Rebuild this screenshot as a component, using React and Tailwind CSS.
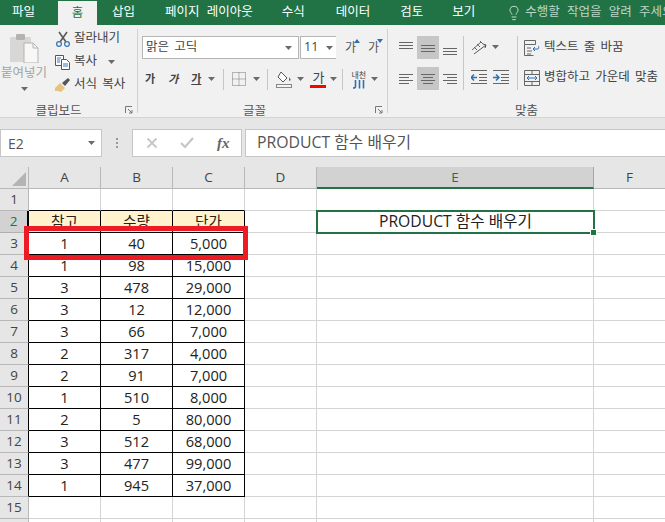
import React from 'react';
import { Lightbulb } from 'lucide-react';

const font = { fontFamily: '"Open Sans", "Noto Sans CJK KR", sans-serif' };

const Caret = ({ className = '' }) => (
  <svg width="7" height="4" viewBox="0 0 7 4" className={className}>
    <path d="M0 0h7L3.5 4z" fill="#6a6a6a" />
  </svg>
);

const Sep = ({ className = '' }) => <div className={`w-px bg-[#c6c6c6] ${className}`} />;

const PasteIcon = () => (
  <svg width="30" height="30" viewBox="0 0 30 30">
    <rect x="1" y="4" width="21" height="25" rx="1" fill="#d9d6d6" />
    <rect x="7" y="1" width="9" height="6" rx="1" fill="#b5b2b2" />
    <path d="M15 10h9l5 5v15H15z" fill="#f7f7f7" stroke="#b3b3b3" />
    <path d="M24 10v5h5" fill="none" stroke="#b3b3b3" />
  </svg>
);

const ScissorsIcon = () => (
  <svg width="16" height="16" viewBox="0 0 16 16" fill="none">
    <path d="M4 1l7 10M12 1L5 11" stroke="#5a5a5a" strokeWidth="1.6" />
    <circle cx="4" cy="13" r="2.4" stroke="#3f77b5" strokeWidth="1.3" />
    <circle cx="12" cy="13" r="2.4" stroke="#3f77b5" strokeWidth="1.3" />
  </svg>
);

const CopyIcon = () => (
  <svg width="16" height="16" viewBox="0 0 16 16" fill="none" stroke="#555">
    <path d="M.5 1.5h8v10h-8z" fill="#fff" />
    <path d="M6.5 5.5h5l3 3v7h-8z" fill="#fff" />
    <path d="M2 4h4M2 6h3M2 8h3M8 10h5M8 12h5" stroke="#3f77b5" />
  </svg>
);

const PainterIcon = () => (
  <svg width="16" height="16" viewBox="0 0 16 16">
    <path d="M0 11l5-5 5 5-4 4-3-1-3 0z" fill="#e8c27c" />
    <path d="M7 6l6-5 2 2-5 6z" fill="#555" />
  </svg>
);

const BorderIcon = () => (
  <svg width="14" height="14" viewBox="0 0 14 14" fill="none" stroke="#777" strokeDasharray="1 1">
    <path d="M.5.5h13v13H.5zM7 .5v13M.5 7h13" />
  </svg>
);

const FillIcon = () => (
  <svg width="16" height="17" viewBox="0 0 16 17" fill="none">
    <path d="M5 1l6 6-4 4-5-5z" fill="#fff" stroke="#555" />
    <path d="M13 6l2 3-2 1z" fill="#3f77b5" />
    <rect x=".5" y="13.5" width="15" height="3" fill="#f4f4f4" stroke="#888" />
  </svg>
);

const Lines = ({ rows }) => (
  <svg width="16" height="16" viewBox="0 0 16 16" stroke="#666" fill="none">
    {rows.map(([x1, x2, y]) => (
      <path key={y} d={`M${x1} ${y + 0.5}H${x2}`} />
    ))}
  </svg>
);

const AlignBtn = ({ rows, active }) => (
  <div className={`w-[22px] h-[23px] flex items-center justify-center ${active ? 'bg-[#c6c6c6]' : ''}`}>
    <Lines rows={rows} />
  </div>
);

const OrientIcon = () => (
  <svg width="17" height="16" viewBox="0 0 17 16" fill="none" stroke="#666">
    <path d="M1 11l9-8M3 8l3 3M6 5l3 3M9 2l3 3" />
    <path d="M3 15l12-9M12 5l3 1-1 3" stroke="#555" />
  </svg>
);

const IndentIcon = ({ flip }) => (
  <svg width="16" height="16" viewBox="0 0 16 16" fill="none">
    <path d="M0 1.5h16M8 5.5h8M8 8.5h8M8 11.5h8M0 14.5h16" stroke="#666" />
    {flip ? (
      <path d="M0 8.5h6M3 5.5l3 3-3 3" stroke="#2f6fb2" strokeWidth="1.5" />
    ) : (
      <path d="M6 8.5H0M3 5.5l-3 3 3 3" stroke="#2f6fb2" strokeWidth="1.5" />
    )}
  </svg>
);

const WrapIcon = () => (
  <svg width="16" height="16" viewBox="0 0 16 16" fill="none" stroke="#666">
    <path d="M.5.5h11v4H.5zM.5 4.5v11h9M3 8h4M3 11h5M3 14h4" />
    <path d="M9 9h5c1 0 1-3 0-3M11 7L9 9l2 2" stroke="#2f6fb2" />
  </svg>
);

const MergeIcon = () => (
  <svg width="16" height="16" viewBox="0 0 16 16" fill="none" stroke="#666">
    <path d="M.5.5h15v15H.5zM.5 4.5h15M.5 11.5h15M8 .5v4M8 11.5v4" />
    <path d="M3 8h10M5 6L3 8l2 2M11 6l2 2-2 2" stroke="#2f6fb2" />
  </svg>
);

const Launcher = () => (
  <svg width="8" height="8" viewBox="0 0 8 8" fill="none" stroke="#777">
    <path d="M.5 7V.5H7M3 3l4 4M7 4v3H4" />
  </svg>
);

const TabBar = () => (
  <div className="h-[25px] bg-[#217346] flex items-center text-[12.5px] [word-spacing:4px] text-white overflow-hidden whitespace-nowrap">
    <span className="ml-3 w-[46px] shrink-0">파일</span>
    <div className="w-[39px] h-6 mt-px shrink-0 bg-[#f1f1f1] text-[#217346] flex items-center justify-center">홈</div>
    <span className="ml-[15px]">삽입</span>
    <span className="ml-[30px]">페이지 레이아웃</span>
    <span className="ml-[29px]">수식</span>
    <span className="ml-[31px]">데이터</span>
    <span className="ml-[30px]">검토</span>
    <span className="ml-[29px]">보기</span>
    <Lightbulb size={16} strokeWidth={1.5} className="ml-[31px] text-[#c4dccf] shrink-0" />
    <span className="ml-[3px] text-[#bcd6c8]">수행할 작업을 알려 주세요</span>
  </div>
);

const SmallBtn = ({ icon, label, caret }) => (
  <div className="h-[23px] flex items-center">
    <span className="w-[19px] flex justify-start shrink-0">{icon}</span>
    <span>{label}</span>
    {caret && <Caret className="ml-[11px]" />}
  </div>
);

const Clipboard = () => (
  <div className="w-[138px] flex flex-col shrink-0 border-r border-[#d0d0d0] mt-[4px] mb-[4px]">
    <div className="flex flex-1 min-h-0">
      <div className="w-[55px] flex flex-col items-center pt-[4px] pr-[7px] text-[#a3a3a3]">
        <PasteIcon />
        <span className="mt-[2px] leading-4">붙여넣기</span>
        <Caret className="mt-[6px]" />
      </div>
      <div className="-mt-[2px]">
        <SmallBtn icon={<ScissorsIcon />} label="잘라내기" />
        <SmallBtn icon={<CopyIcon />} label="복사" caret />
        <SmallBtn icon={<PainterIcon />} label="서식 복사" />
      </div>
    </div>
    <div className="h-[20px] pt-[16px] flex items-center justify-center relative text-[#555]">
      <span className="pr-[20px]">클립보드</span>
      <span className="absolute right-[4px] top-[13px]"><Launcher /></span>
    </div>
  </div>
);

const FontGroup = () => (
  <div className="w-[250px] flex flex-col shrink-0 border-r border-[#d0d0d0] mt-[4px] mb-[4px]">
    <div className="flex-1 min-h-0 pl-[4px] pt-[7px]">
      <div className="flex items-center">
        <div className="w-[157px] h-[23px] bg-white border border-[#b5b5b5] flex items-center justify-between pl-[3px] pr-[6px]">
          <span>맑은 고딕</span>
          <Caret />
        </div>
        <div className="w-[36px] h-[23px] ml-px bg-white border border-[#b5b5b5] border-r-0 flex items-center justify-between pl-[3px] pr-[3px]">
          <span>11</span>
          <Caret />
        </div>
        <span className="ml-[9px] relative text-[12px] text-[#555]">가
          <span className="absolute -right-[4px] top-0 w-0 h-0 border-x-[3px] border-x-transparent border-b-[4px] border-b-[#2f6fb2]" />
        </span>
        <span className="ml-[12px] relative text-[12px] text-[#555]">가
          <span className="absolute -right-[4px] top-0 w-0 h-0 border-x-[3px] border-x-transparent border-t-[4px] border-t-[#2f6fb2]" />
        </span>
      </div>
      <div className="flex items-center h-[24px] mt-[8px] text-[11px] font-bold text-[#444]">
        <span className="ml-[3px]">가</span>
        <span className="ml-[13px] italic">가</span>
        <span className="ml-[13px] underline">가</span>
        <Caret className="ml-[7px]" />
        <Sep className="h-[21px] ml-[8px]" />
        <span className="ml-[8px]"><BorderIcon /></span>
        <Caret className="ml-[7px]" />
        <Sep className="h-[21px] ml-[7px]" />
        <span className="ml-[8px]"><FillIcon /></span>
        <Caret className="ml-[5px]" />
        <span className="ml-[6px] flex flex-col items-center text-[13px] font-normal w-[16px] leading-[15px]">
          가
          <span className="block w-[16px] h-[3px] bg-[#ff0000]" />
        </span>
        <Caret className="ml-[4px]" />
        <Sep className="h-[21px] ml-[5px]" />
        <span className="ml-[8px] flex flex-col items-center font-normal">
          <span className="text-[8px] leading-[10px]">내천</span>
          <svg width="14" height="9" viewBox="0 0 14 9" fill="none" stroke="#2f6fb2" strokeWidth="1.6">
            <path d="M3.5 0v6.5c0 1-1 1.5-2.5 1.5M7.5 0v8.5M11.5 0v8.5" />
          </svg>
        </span>
        <Caret className="ml-[5px]" />
      </div>
    </div>
    <div className="h-[20px] pt-[16px] flex items-center justify-center relative text-[#555]">
      <span className="pr-[16px]">글꼴</span>
      <span className="absolute right-[4px] top-[13px]"><Launcher /></span>
    </div>
  </div>
);

const AlignGroup = () => (
  <div className="flex-1 flex flex-col mt-[4px] mb-[4px]">
    <div className="flex-1 min-h-0 pl-[7px] pt-[7px] flex">
      <div className="grid grid-cols-3 gap-y-[8px] h-[54px]">
        <AlignBtn rows={[[1, 15, 2], [1, 15, 5], [1, 15, 8]]} />
        <AlignBtn active rows={[[1, 15, 5], [1, 15, 8], [1, 15, 11]]} />
        <AlignBtn rows={[[1, 15, 8], [1, 15, 11], [1, 15, 14]]} />
        <AlignBtn rows={[[1, 15, 3], [1, 11, 6], [1, 15, 9], [1, 11, 12]]} />
        <AlignBtn active rows={[[1, 15, 3], [3, 13, 6], [1, 15, 9], [3, 13, 12]]} />
        <AlignBtn rows={[[1, 15, 3], [5, 15, 6], [1, 15, 9], [5, 15, 12]]} />
      </div>
      <div className="w-[55px] ml-[2px] border-x border-[#c6c6c6] h-[54px] pl-[7px] pr-[6px] flex flex-col gap-[14px] pt-[3px]">
        <div className="flex items-center h-[16px] gap-[4px]">
          <OrientIcon />
          <Caret />
        </div>
        <div className="flex items-center justify-between h-[16px] w-[38px]">
          <IndentIcon />
          <IndentIcon flip />
        </div>
      </div>
      <div className="ml-[6px] flex flex-col gap-[7px] whitespace-nowrap [word-spacing:2px]">
        <div className="h-[23px] flex items-center gap-[4px]"><WrapIcon />텍스트 줄 바꿈</div>
        <div className="h-[23px] flex items-center gap-[4px]"><MergeIcon />병합하고 가운데 맞춤</div>
      </div>
    </div>
    <div className="h-[20px] pt-[16px] flex items-center justify-center text-[#555]">맞춤</div>
  </div>
);

const Ribbon = () => (
  <div className="h-[93px] bg-[#f1f1f1] border-b border-[#d4d4d4] flex text-[12.5px] [word-spacing:2px] text-[#444] whitespace-nowrap">
    <Clipboard />
    <FontGroup />
    <AlignGroup />
  </div>
);

const FormulaBar = () => (
  <div className="bg-[#e6e6e6] pt-[11px] pb-[10px] flex h-[49px] text-[#555]">
    <div className="w-[102px] h-[28px] bg-white border border-[#c6c6c6] flex items-center justify-between pl-[7px] pr-[6px] text-[14px]">
      <span>E2</span>
      <Caret />
    </div>
    <div className="w-[30px] flex items-center justify-center">
      <svg width="3" height="11" viewBox="0 0 3 11" fill="#999">
        <rect y="0" width="2" height="2" /><rect y="4" width="2" height="2" /><rect y="8" width="2" height="2" />
      </svg>
    </div>
    <div className="w-[110px] h-[28px] bg-white border border-[#c6c6c6] flex items-center pl-[13px]">
      <svg width="12" height="12" viewBox="0 0 12 12" stroke="#c6c6c6" strokeWidth="1.8"><path d="M1.5 1.5l9 9M10.5 1.5l-9 9" /></svg>
      <svg width="14" height="12" viewBox="0 0 14 12" fill="none" stroke="#c6c6c6" strokeWidth="2.2" className="ml-[22px]"><path d="M1 6l4 4 8-9" /></svg>
      <span className="ml-[23px] text-[15px] italic font-bold leading-none text-[#666]" style={{ fontFamily: '"Liberation Serif", serif' }}>fx</span>
    </div>
    <div className="ml-[3px] flex-1 h-[28px] bg-white border border-[#c6c6c6] border-r-0 flex items-center pl-[11px] text-[15.8px]">
      PRODUCT 함수 배우기
    </div>
  </div>
);

const colWidths = 'grid-cols-[29px_72px_72px_72px_72px_277px_72px]';

const data = [
  [1, 40, '5,000'], [1, 98, '15,000'], [3, 478, '29,000'], [3, 12, '12,000'], [3, 66, '7,000'],
  [2, 317, '4,000'], [2, 91, '7,000'], [1, 510, '8,000'], [2, 5, '80,000'], [3, 512, '68,000'],
  [3, 477, '99,000'], [1, 945, '37,000'],
];

const Blank = ({ className = 'border-[#d4d4d4]' }) => <div className={`border-r border-b ${className}`} />;

const RowHead = ({ n, active, dark }) => (
  <div className={`flex items-center justify-center border-b border-r text-[13.5px] ${active ? 'bg-[#d2d2d2] text-[#217346] border-r-[#217346] border-r-2 border-b-[#b0b0b0]' : 'bg-[#e6e6e6] text-[#444] border-[#b8b8b8]'} ${dark ? '!border-r-black' : ''}`}>
    {n}
  </div>
);

const Cell = ({ children, head }) => (
  <div className={`flex items-center justify-center border-r border-b border-black text-[14.6px] text-[#222] ${head ? 'bg-[#fff2cc]' : 'bg-white'}`}>
    {children}
  </div>
);

const Sheet = () => (
  <div className={`relative grid ${colWidths} auto-rows-[22px] overflow-hidden bg-white`}>
    <div className="bg-[#e6e6e6] border-r border-b border-[#b8b8b8] flex items-end justify-end p-[2px]">
      <div className="w-0 h-0 border-l-[14px] border-l-transparent border-b-[14px] border-b-[#b4b4b4]" />
    </div>
    {['A', 'B', 'C', 'D', 'E', 'F'].map((c) => (
      <div
        key={c}
        className={`flex items-center justify-center text-[13.5px] ${c === 'E' ? 'bg-[#d2d2d2] text-[#217346] border-b-2 border-b-[#217346] border-r border-r-[#a8a8a8]' : 'bg-[#e6e6e6] text-[#444] border-b border-r border-[#b8b8b8]'}`}
      >
        {c}
      </div>
    ))}

    <RowHead n={1} />
    <Blank className="border-black border-r-[#d4d4d4]" />
    <Blank className="border-black border-r-[#d4d4d4]" />
    <Blank className="border-black border-r-[#d4d4d4]" />
    <Blank /><Blank /><Blank />

    <RowHead n={2} active dark />
    <Cell head>참고</Cell>
    <Cell head>수량</Cell>
    <Cell head>단가</Cell>
    <Blank />
    <div className="relative flex items-center justify-center text-[15.7px] text-[#222]">
      PRODUCT 함수 배우기
      <div className="absolute -left-px -top-px w-[279px] h-[24px] border-2 border-[#217346]" />
      <div className="absolute -right-[2px] -bottom-[2px] w-[5px] h-[5px] bg-[#217346] outline outline-1 outline-white" />
    </div>
    <Blank />

    {data.map((row, i) => (
      <React.Fragment key={i}>
        <RowHead n={i + 3} dark />
        {row.map((v, j) => <Cell key={j}>{v}</Cell>)}
        <Blank /><Blank /><Blank />
      </React.Fragment>
    ))}

    <RowHead n={15} />
    <Blank /><Blank /><Blank /><Blank /><Blank /><Blank />
    <RowHead n="" />
    <Blank /><Blank /><Blank /><Blank /><Blank /><Blank />

    <div className="absolute left-[24px] top-[59px] w-[224px] h-[34px] border-[5px] border-[#ed1c24]" />
  </div>
);

export default function App() {
  return (
    <div className="w-[665px] h-[522px] overflow-hidden bg-white" style={font}>
      <TabBar />
      <Ribbon />
      <FormulaBar />
      <Sheet />
    </div>
  );
}
